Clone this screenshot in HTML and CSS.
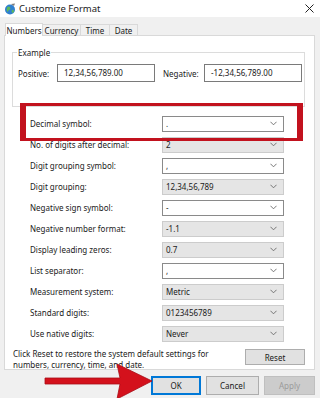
FILE: index.html
```html
<!DOCTYPE html>
<html lang="en">

<head>
    <meta charset="UTF-8">
    <meta name="viewport" content="width=device-width, initial-scale=1.0">
    <title>Customize Format</title>
    <link rel="stylesheet" href="styles.css">
</head>

<body>
    <div class="window">
        <!-- Barra de titulo -->
        <div class="titlebar">
            <svg class="app-icon" width="12" height="12" viewBox="0 0 12 12">
                <circle cx="6" cy="6.5" r="5" fill="#2f7fd0" />
                <path d="M3 4.5 Q4.5 3 6 4 L6.5 6 L4.5 7.5 L3.5 9 Q2 7 3 4.5 Z" fill="#5cb85c" />
                <path d="M7.5 7.5 L9.5 6.5 L10 9 L8 10 Z" fill="#5cb85c" />
                <path d="M7 1 L11 0.5 L10 3 Z" fill="#7a7a7a" />
            </svg>
            <span class="title">Customize Format</span>
            <svg class="close" width="9" height="9" viewBox="0 0 9 9">
                <path d="M0.5 0.5 L8.5 8.5 M8.5 0.5 L0.5 8.5" stroke="#222" stroke-width="1" />
            </svg>
        </div>

        <div class="content">
            <!-- Pestañas -->
            <div class="tabs">
                <div class="tab active tab-numbers">Numbers</div>
                <div class="tab tab-currency">Currency</div>
                <div class="tab tab-time">Time</div>
                <div class="tab tab-date">Date</div>
            </div>

            <div class="panel">
                <fieldset class="example">
                    <legend>Example</legend>
                    <div class="example-row">
                        <span class="example-label">Positive:</span>
                        <div class="textbox">12,34,56,789.00</div>
                        <span class="example-label">Negative:</span>
                        <div class="textbox">-12,34,56,789.00</div>
                    </div>
                </fieldset>

                <div class="settings">
                    <div class="setting">
                        <span>Decimal symbol:</span>
                        <div class="combo edit">.<svg class="chev" viewBox="0 0 8 5"><path d="M0.5 0.5 L4 4 L7.5 0.5" /></svg></div>
                    </div>
                    <div class="setting">
                        <span>No. of digits after decimal:</span>
                        <div class="combo">2<svg class="chev" viewBox="0 0 8 5"><path d="M0.5 0.5 L4 4 L7.5 0.5" /></svg></div>
                    </div>
                    <div class="setting">
                        <span>Digit grouping symbol:</span>
                        <div class="combo edit">,<svg class="chev" viewBox="0 0 8 5"><path d="M0.5 0.5 L4 4 L7.5 0.5" /></svg></div>
                    </div>
                    <div class="setting">
                        <span>Digit grouping:</span>
                        <div class="combo">12,34,56,789<svg class="chev" viewBox="0 0 8 5"><path d="M0.5 0.5 L4 4 L7.5 0.5" /></svg></div>
                    </div>
                    <div class="setting">
                        <span>Negative sign symbol:</span>
                        <div class="combo edit">-<svg class="chev" viewBox="0 0 8 5"><path d="M0.5 0.5 L4 4 L7.5 0.5" /></svg></div>
                    </div>
                    <div class="setting">
                        <span>Negative number format:</span>
                        <div class="combo">-1.1<svg class="chev" viewBox="0 0 8 5"><path d="M0.5 0.5 L4 4 L7.5 0.5" /></svg></div>
                    </div>
                    <div class="setting">
                        <span>Display leading zeros:</span>
                        <div class="combo">0.7<svg class="chev" viewBox="0 0 8 5"><path d="M0.5 0.5 L4 4 L7.5 0.5" /></svg></div>
                    </div>
                    <div class="setting">
                        <span>List separator:</span>
                        <div class="combo edit">,<svg class="chev" viewBox="0 0 8 5"><path d="M0.5 0.5 L4 4 L7.5 0.5" /></svg></div>
                    </div>
                    <div class="setting">
                        <span>Measurement system:</span>
                        <div class="combo">Metric<svg class="chev" viewBox="0 0 8 5"><path d="M0.5 0.5 L4 4 L7.5 0.5" /></svg></div>
                    </div>
                    <div class="setting">
                        <span>Standard digits:</span>
                        <div class="combo">0123456789<svg class="chev" viewBox="0 0 8 5"><path d="M0.5 0.5 L4 4 L7.5 0.5" /></svg></div>
                    </div>
                    <div class="setting">
                        <span>Use native digits:</span>
                        <div class="combo">Never<svg class="chev" viewBox="0 0 8 5"><path d="M0.5 0.5 L4 4 L7.5 0.5" /></svg></div>
                    </div>
                </div>

                <div class="reset-row">
                    <p>Click Reset to restore the system default settings for numbers, currency, time, and date.</p>
                    <button type="button" class="btn btn-reset">Reset</button>
                </div>
            </div>

            <!-- Botones -->
            <div class="buttons">
                <button type="button" class="btn btn-ok">OK</button>
                <button type="button" class="btn btn-cancel">Cancel</button>
                <button type="button" class="btn btn-apply" disabled>Apply</button>
            </div>
        </div>

        <!-- Marcas encima -->
        <div class="highlight"></div>
        <svg class="arrow" width="320" height="398" viewBox="0 0 320 398">
            <polygon points="45,378 120,378 117,364 152,381 117,399 120,384 45,384" fill="#d4111c" stroke="#a80d16" stroke-width="0.8" />
        </svg>
    </div>
</body>

</html>
```

FILE: styles.css
```css
/* General */
body {
    margin: 0;
    padding: 0;
    background: #f0f0f0;
    font-family: 'Segoe UI', 'Noto Sans', sans-serif;
    font-size: 8px;
    color: #1a1a1a;
}

.window {
    position: relative;
    width: 320px;
    height: 398px;
    overflow: hidden;
    background: #f0f0f0;
}

/* Barra de titulo */
.titlebar {
    display: flex;
    align-items: center;
    height: 17px;
    background: #fff;
    padding: 0 6px 0 4px;
}

.app-icon {
    margin-right: 3px;
}

.title {
    flex: 1;
    font-size: 9.5px;
}

.content {
    padding: 5px 5px 0 4px;
}

/* Pestañas */
.tabs {
    display: flex;
    align-items: flex-end;
    height: 13px;
    padding-left: 1px;
}

.tab {
    box-sizing: border-box;
    height: 11px;
    line-height: 11px;
    text-align: center;
    border: 1px solid #d9d9d9;
    border-bottom: none;
    border-left: none;
    background: #f0f0f0;
}

.tab.active {
    height: 13px;
    line-height: 13px;
    background: #fff;
    border-left: 1px solid #d9d9d9;
    position: relative;
    z-index: 1;
    margin-bottom: -1px;
}

.tab-numbers {
    width: 38px;
}

.tab-currency {
    width: 38px;
}

.tab-time {
    width: 29px;
}

.tab-date {
    width: 28px;
}

.panel {
    height: 335px;
    box-sizing: border-box;
    background: #fff;
    border: 1px solid #d9d9d9;
    padding: 11px 9px 0 7px;
}

/* Ejemplo */
.example {
    margin: 0;
    padding: 4px 2px 4px 5px;
    height: 60px;
    box-sizing: border-box;
    border: 1px solid #dcdcdc;
}

.example legend {
    padding: 0 1px;
    margin-left: -1px;
}

.example-row {
    display: flex;
    align-items: center;
    gap: 1px;
    margin-top: 2px;
}

.example-label {
    width: 38px;
}

.example-label + .textbox + .example-label {
    margin-left: 7px;
    width: 40px;
}

.textbox {
    width: 98px;
    height: 18px;
    box-sizing: border-box;
    border: 1px solid #7a7a7a;
    padding: 0 6px;
    line-height: 16px;
}

/* Configuracion */
.settings {
    margin-top: 6px;
    padding-left: 18px;
}

.setting {
    display: grid;
    grid-template-columns: 132px 122px;
    align-items: center;
    height: 21px;
}

.combo {
    display: flex;
    align-items: center;
    justify-content: space-between;
    height: 16px;
    box-sizing: border-box;
    padding: 0 6px 0 3px;
    background: #e5e5e5;
    border: 1px solid #cccccc;
}

.combo.edit {
    background: #fff;
    border-color: #8a8a8a;
}

.chev {
    width: 7px;
    height: 5px;
    fill: none;
    stroke: #666;
    stroke-width: 1;
}

/* Reset */
.reset-row {
    display: flex;
    align-items: flex-start;
    justify-content: space-between;
    margin-top: 4px;
    margin-left: 1px;
}

.reset-row p {
    margin: 0;
    width: 215px;
    line-height: 11px;
}

.btn {
    font-family: inherit;
    font-size: 8px;
    height: 16px;
    padding: 0;
    background: #e1e1e1;
    border: 1px solid #adadad;
    color: #1a1a1a;
}

.btn-reset {
    width: 60px;
    margin-top: 1px;
}

/* Botones */
.buttons {
    display: flex;
    justify-content: flex-end;
    gap: 5px;
    padding-top: 6px;
}

.buttons .btn {
    height: 19px;
}

.btn-ok {
    width: 50px;
    border: 2px solid #0078d7;
}

.btn-cancel {
    width: 53px;
}

.btn-apply {
    width: 51px;
    background: #cccccc;
    border-color: #bfbfbf;
    color: #9a9a9a;
}

/* Encima */
.highlight {
    position: absolute;
    left: 20px;
    top: 103px;
    width: 283px;
    height: 38px;
    box-sizing: border-box;
    border: 3px solid #c2121e;
    border-left-width: 6px;
    border-right-width: 6px;
}

.arrow {
    position: absolute;
    left: 0;
    top: 0;
    pointer-events: none;
}
```
